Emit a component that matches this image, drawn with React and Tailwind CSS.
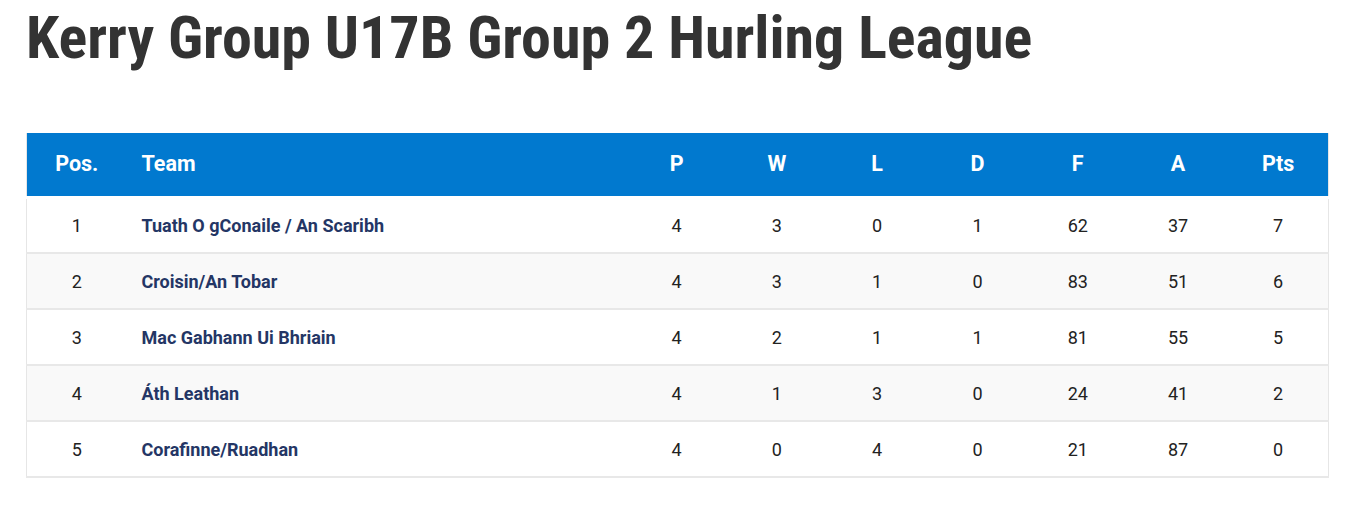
const rows = [
  { pos: 1, team: 'Tuath O gConaile / An Scaribh', p: 4, w: 3, l: 0, d: 1, f: 62, a: 37, pts: 7 },
  { pos: 2, team: 'Croisin/An Tobar', p: 4, w: 3, l: 1, d: 0, f: 83, a: 51, pts: 6 },
  { pos: 3, team: 'Mac Gabhann Ui Bhriain', p: 4, w: 2, l: 1, d: 1, f: 81, a: 55, pts: 5 },
  { pos: 4, team: 'Áth Leathan', p: 4, w: 1, l: 3, d: 0, f: 24, a: 41, pts: 2 },
  { pos: 5, team: 'Corafinne/Ruadhan', p: 4, w: 0, l: 4, d: 0, f: 21, a: 87, pts: 0 },
];

const stats = ['p', 'w', 'l', 'd', 'f', 'a', 'pts'];

export default function App() {
  return (
    <div className="min-h-screen bg-white font-['Roboto',sans-serif]">
      <h1 className="pl-[26px] pt-[2px] text-[60px] leading-[1.2] font-bold text-[#333333] font-['Roboto_Condensed','Liberation_Sans_Narrow',sans-serif]">
        Kerry Group U17B Group 2 Hurling League
      </h1>

      <div className="pl-[26px] pr-[18px] mt-[59px]">
        <table className="w-full border-collapse table-fixed border-l border-r border-[#e6e6e6]">
          <colgroup>
            <col className="w-[100px]" />
            <col />
            {stats.map((s) => (
              <col key={s} className="w-[100.3px]" />
            ))}
          </colgroup>
          <thead>
            <tr className="bg-[#0179cf] text-white h-[64px] border-b-[3px] border-white">
              <th className="text-center text-[21.5px] font-bold">Pos.</th>
              <th className="text-left pl-[15px] text-[21.5px] font-bold">Team</th>
              {['P', 'W', 'L', 'D', 'F', 'A', 'Pts'].map((h) => (
                <th key={h} className="text-center text-[21.5px] font-bold">{h}</th>
              ))}
            </tr>
          </thead>
          <tbody>
            {rows.map((r, i) => (
              <tr
                key={r.pos}
                className={`h-[56px] border-b-2 border-[#e8e8e8] ${i % 2 === 1 ? 'bg-[#f9f9f9]' : 'bg-white'}`}
              >
                <td className="text-center text-[18px] text-[#222]">{r.pos}</td>
                <td className="text-left pl-[15px] text-[18px] font-bold text-[#243665]">{r.team}</td>
                {stats.map((s) => (
                  <td key={s} className="text-center text-[18px] text-[#222]">{r[s]}</td>
                ))}
              </tr>
            ))}
          </tbody>
        </table>
      </div>
    </div>
  );
}
